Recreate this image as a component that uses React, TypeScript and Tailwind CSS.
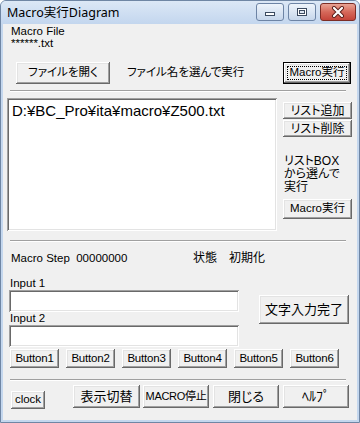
import React from "react";

const raised =
  "flex items-center justify-center whitespace-nowrap bg-[#f0f0f0] text-black shadow-[inset_-1px_-1px_0_#696969,inset_1px_1px_0_#ffffff,inset_-2px_-2px_0_#a0a0a0,inset_2px_2px_0_#e3e3e3]";
const sunken =
  "bg-white shadow-[inset_1px_1px_0_#a0a0a0,inset_-1px_-1px_0_#ffffff,inset_2px_2px_0_#696969,inset_-2px_-2px_0_#e3e3e3]";

function Sep() {
  return (
    <div className="ml-[7px] w-[336px] flex flex-col">
      <div className="h-px bg-[#a0a0a0]" />
      <div className="h-px bg-white" />
    </div>
  );
}

function Btn({ children, className = "" }: { children: React.ReactNode; className?: string }) {
  return <div className={`${raised} ${className}`}>{children}</div>;
}

export default function App() {
  return (
    <div className="w-[360px] h-[423px] flex flex-col bg-[#c4d7ee] border border-[#6f86a4] rounded-t-[6px] overflow-hidden font-['Liberation_Sans','Noto_Sans_CJK_JP',sans-serif] [font-feature-settings:'palt'] text-[11.5px] text-black whitespace-nowrap">
      {/* Title bar */}
      <div className="h-[23px] flex items-start bg-gradient-to-b from-[#dce8f6] to-[#c3d6ee]">
        <div className="ml-[6px] mt-[4px] text-[12.5px] leading-[16px] font-['Noto_Sans','Noto_Sans_CJK_JP',sans-serif] text-black">
          Macro実行Diagram
        </div>
        <div className="ml-auto mr-[3px] mt-[2px] flex gap-[4px]">
          <div className="w-[28px] h-[18px] rounded-[3px] border border-[#6d84a5] bg-gradient-to-b from-[#eef4fb] to-[#c6d6eb] flex items-end justify-center pb-[4px]">
            <div className="w-[10px] h-[4px] bg-white border border-[#3b4a60]" />
          </div>
          <div className="w-[28px] h-[18px] rounded-[3px] border border-[#6d84a5] bg-gradient-to-b from-[#eef4fb] to-[#c6d6eb] flex items-center justify-center">
            <div className="w-[10px] h-[8px] border border-[#3b4a60] bg-white flex items-center justify-center">
              <div className="w-[6px] h-[4px] border border-[#3b4a60] bg-[#dfe7f2]" />
            </div>
          </div>
          <div className="w-[36px] h-[18px] rounded-[3px] border border-[#7c2d25] bg-gradient-to-b from-[#e8a394] via-[#d6685a] to-[#c5443a] flex items-center justify-center">
            <svg width="14" height="12" viewBox="0 0 14 12">
              <path d="M3 2 L11 10 M11 2 L3 10" stroke="#5a1f1a" strokeWidth="4" strokeLinecap="round" />
              <path d="M3 2 L11 10 M11 2 L3 10" stroke="#ffffff" strokeWidth="2.2" strokeLinecap="round" />
            </svg>
          </div>
        </div>
      </div>

      {/* Client area */}
      <div className="flex-1 mx-[2px] mb-[2px] bg-[#f0f0f0] flex flex-col">
        <div className="mt-[2px] pl-[8px] leading-[11.5px]">
          <div className="h-[11.5px]">Macro File</div>
          <div className="h-[11.5px]">******.txt</div>
        </div>

        <div className="mt-[13px] h-[22px] flex items-center">
          <Btn className="ml-[13px] w-[94px] h-[22px]">ファイルを開く</Btn>
          <div className="ml-[17px]">ファイル名を選んで実行</div>
          <div className="ml-auto mr-[6px] w-[68px] h-[22px] border border-black">
            <div className={`${raised} w-full h-full p-[3px]`}>
              <div className="w-full h-full border border-dotted border-black flex items-center justify-center">
                Macro実行
              </div>
            </div>
          </div>
        </div>

        <div className="mt-[6px]">
          <Sep />
        </div>

        <div className="mt-[6px] h-[133px] flex">
          <div className={`${sunken} ml-[4px] w-[270px] h-[133px] pl-[5px] pt-[4px]`}>
            <div className="text-[15px] leading-[18px] font-['Liberation_Sans',sans-serif]">
              D:¥BC_Pro¥ita¥macro¥Z500.txt
            </div>
          </div>
          <div className="ml-[6px] w-[69px] flex flex-col">
            <Btn className="mt-[4px] h-[17px] text-[12px]">リスト追加</Btn>
            <Btn className="mt-[1px] h-[17px] text-[12px]">リスト削除</Btn>
            <div className="mt-[18px] ml-[1px] leading-[13px] text-[12px]">
              <div>リストBOX</div>
              <div>から選んで</div>
              <div>実行</div>
            </div>
            <Btn className="mt-[5px] h-[20px]">Macro実行</Btn>
          </div>
        </div>

        <div className="mt-[9px]">
          <Sep />
        </div>

        <div className="mt-[10px] h-[12px] leading-[12px] flex pl-[8px]">
          <div className="w-[182px]">Macro Step&nbsp;&nbsp;00000000</div>
          <div className="text-[12px]">状態　初期化</div>
        </div>

        <div className="mt-[13px] flex">
          <div className="ml-[6px] w-[230px] flex flex-col">
            <div className="h-[13px] leading-[12px] pl-[1px]">Input 1</div>
            <div className={`${sunken} h-[22px]`} />
            <div className="h-[13px] leading-[12px] pl-[1px]">Input 2</div>
            <div className={`${sunken} h-[22px]`} />
          </div>
          <Btn className="ml-[20px] mt-[18px] w-[90px] h-[29px] text-[13px]">文字入力完了</Btn>
        </div>

        <div className="mt-[2px] h-[19px] flex gap-[7px] pl-[7px] text-[11.5px]">
          <Btn className="w-[49px] h-[19px] tracking-[-0.2px]">Button1</Btn>
          <Btn className="w-[49px] h-[19px] tracking-[-0.2px]">Button2</Btn>
          <Btn className="w-[49px] h-[19px] tracking-[-0.2px]">Button3</Btn>
          <Btn className="w-[49px] h-[19px] tracking-[-0.2px]">Button4</Btn>
          <Btn className="w-[49px] h-[19px] tracking-[-0.2px]">Button5</Btn>
          <Btn className="w-[49px] h-[19px] tracking-[-0.2px]">Button6</Btn>
        </div>

        <div className="mt-[11px]">
          <Sep />
        </div>

        <div className="mt-[4px] flex items-start">
          <Btn className="ml-[8px] mt-[6px] w-[34px] h-[18px]">clock</Btn>
          <Btn className="ml-[28px] w-[67px] h-[23px] text-[13px]">表示切替</Btn>
          <Btn className="ml-[3px] w-[66px] h-[23px] text-[11px] tracking-[-0.3px]">MACRO停止</Btn>
          <Btn className="ml-[4px] w-[66px] h-[23px] text-[13px]">閉じる</Btn>
          <Btn className="ml-[4px] w-[66px] h-[23px] text-[14px]">ﾍﾙﾌﾟ</Btn>
        </div>
      </div>
    </div>
  );
}
